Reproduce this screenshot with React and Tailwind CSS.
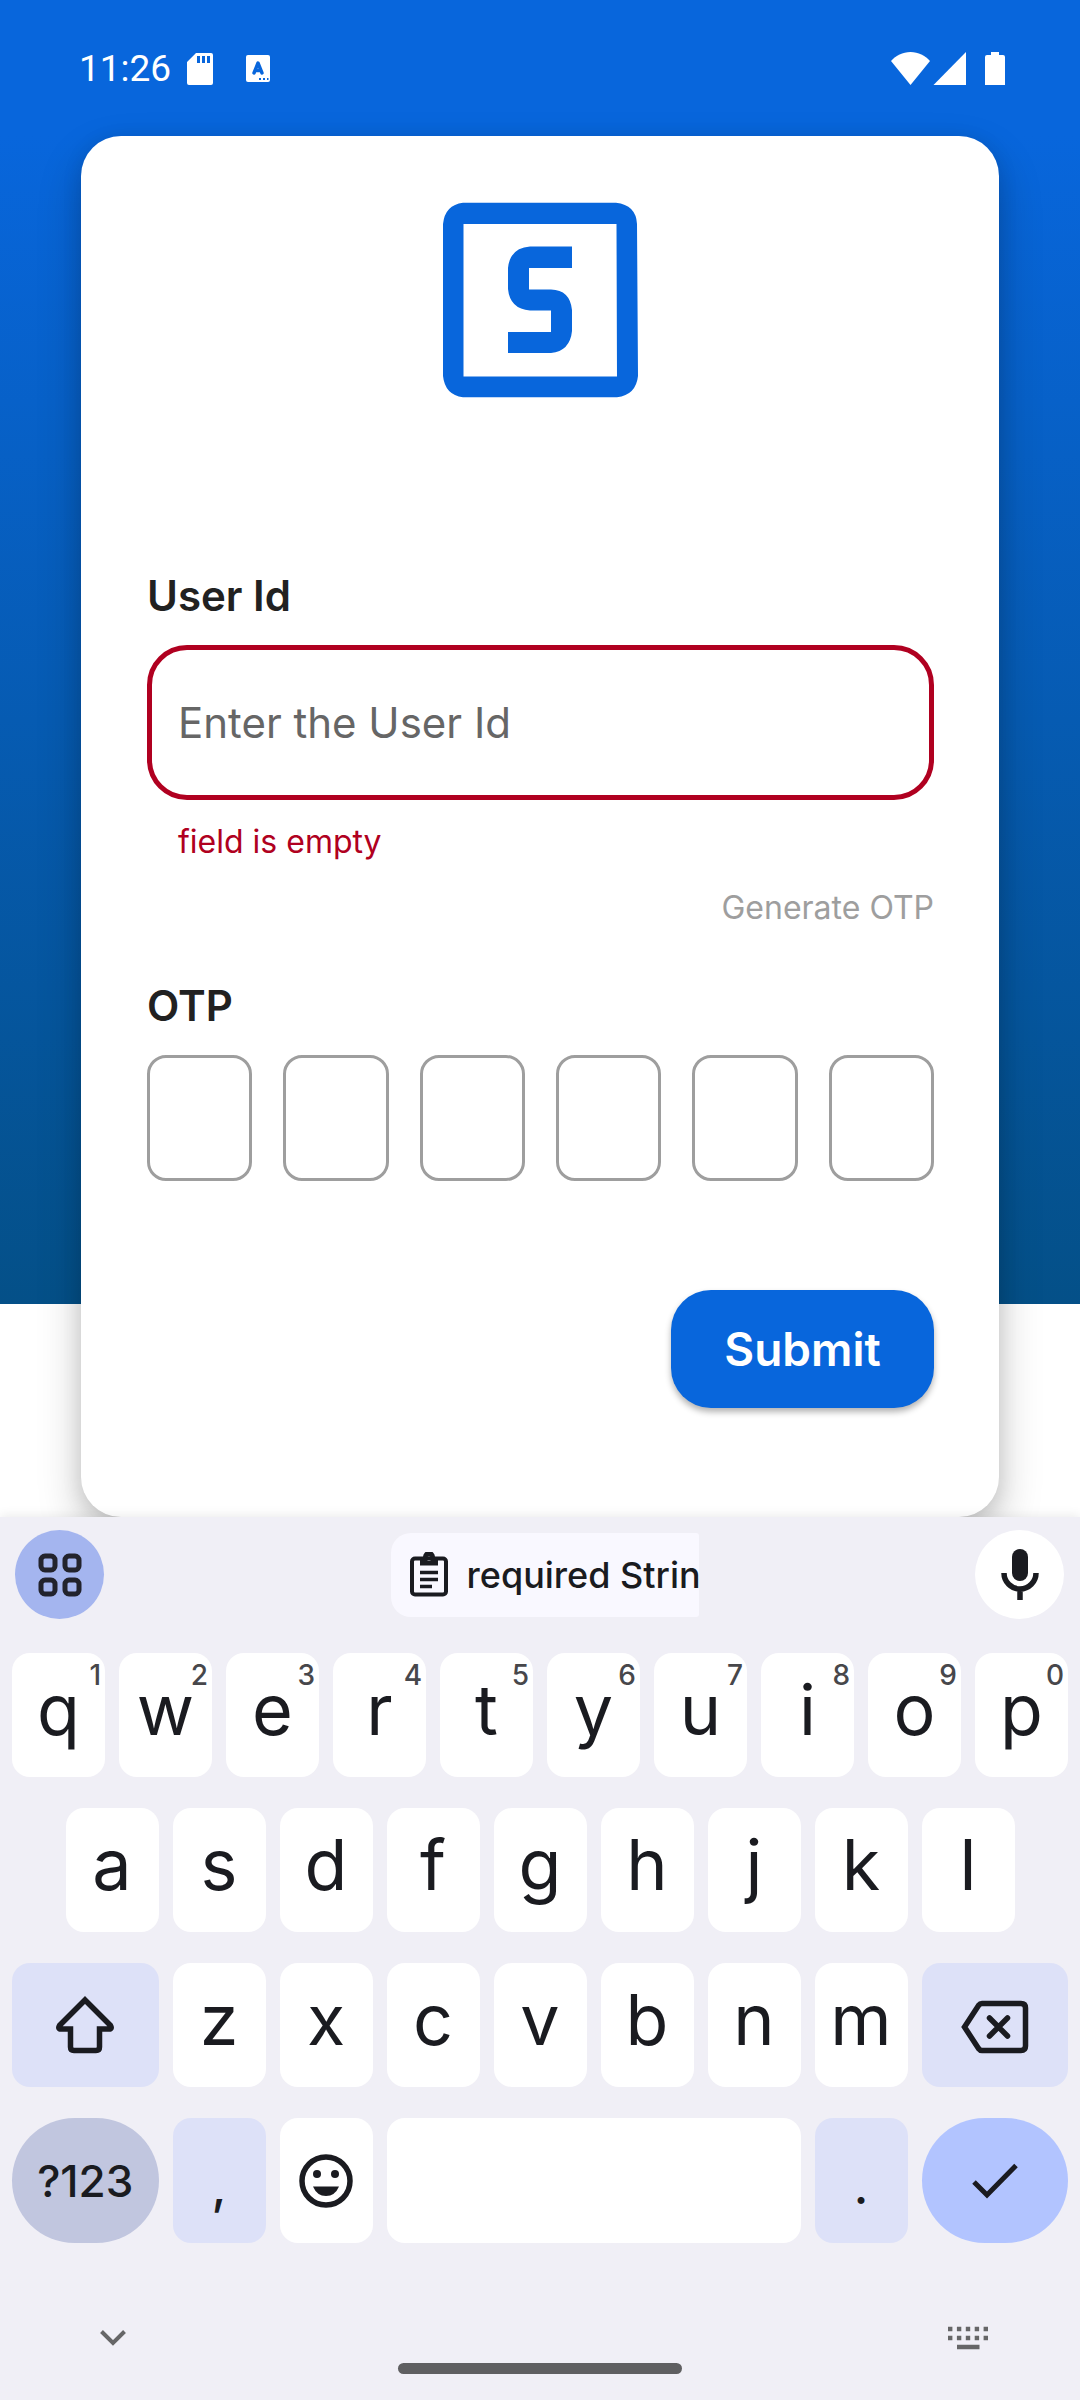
const INK = "#1a1b20";

function StatusBar() {
  return (
    <header className="flex h-[136px] items-center justify-between pt-[1px] pr-[75px] pl-[79px] font-[Roboto,sans-serif] text-white">
      <div className="flex items-center">
        <span className="text-[37px] leading-[44px]">11:26</span>
        <svg className="ml-[16px] h-8 w-[26px]" viewBox="0 0 26 32" aria-hidden="true">
          <path fill="#fff" fillRule="evenodd" d="M9 0h15a2 2 0 0 1 2 2v28a2 2 0 0 1-2 2H2a2 2 0 0 1-2-2V9zM10 3v7h3V3zM15 3v7h3V3zM20 3v7h3V3z" />
        </svg>
        <svg className="ml-[33px] h-[27px] w-6" viewBox="0 0 24 27" aria-hidden="true">
          <rect width="24" height="27" rx="2" fill="#fff" />
          <path d="M8 18 12 8l4 10M9.500 15.500h5" fill="none" stroke="#0866dc" strokeWidth="3.400" strokeLinecap="round" strokeLinejoin="round" />
          <path d="M13 24h2M17 24h2M21 24h1.500" stroke="#0866dc" strokeWidth="2" />
        </svg>
      </div>
      <svg className="h-[33px] w-[114px]" viewBox="0 0 114 33" fill="#fff" aria-hidden="true">
        <path d="M0 9C5 3.500 11.500 0 19.500 0S34 3.500 39 9L19.500 33z" />
        <path d="M75 0v33H42.500z" />
        <path d="M100 0h8v3h4q2 0 2 2v28H94V5q0-2 2-2h4z" />
      </svg>
    </header>
  );
}

function Logo() {
  return (
    <svg className="h-[196px] w-[196px]" viewBox="0 0 196 196" role="img" aria-label="Logo">
      <path
        fill="#0866dc"
        fillRule="evenodd"
        d="M20 .800H173Q193 3 194 22L195 174Q193 193 174 195.200H20Q2 193 0 174V22Q2 3 20 .800zM20.500 22V174.500H174L173.500 22z"
      />
      <path
        fill="#0866dc"
        d="M129 44.500H87Q67 46 65 66V87Q67 107 87 108.500H108V130H65V151H108Q127 149 129 129V108Q127 88 108 87.500H86V66H129z"
      />
    </svg>
  );
}

function LoginCard() {
  return (
    <form className="mx-[81px] flex flex-col rounded-[40px] bg-white pt-[66px] pr-[65px] pb-[109px] pl-[66px] shadow-[0_20px_44px_rgba(0,0,0,0.22),0_4px_20px_rgba(0,0,0,0.1)]">
      <div className="flex justify-center">
        <Logo />
      </div>
      <label htmlFor="user-id" className="mt-[174px] text-[42px] leading-[48px] font-semibold text-[#212121]">
        User Id
      </label>
      <input
        id="user-id"
        type="text"
        placeholder="Enter the User Id"
        aria-invalid="true"
        aria-describedby="user-id-error"
        className="mt-[25px] h-[155px] w-full rounded-[40px] border-[5px] border-[#b00020] bg-white px-[26px] text-[42px] text-[#212121] outline-none placeholder:text-[#666666]"
      />
      <p id="user-id-error" className="mt-[22px] pl-[31px] text-[32px] leading-[40px] text-[#b00020]">
        field is empty
      </p>
      <button type="button" className="mt-[26px] self-end text-[32px] leading-[40px] text-[#9e9e9e]">
        Generate OTP
      </button>
      <label htmlFor="otp-1" className="mt-[54px] text-[42px] leading-[48px] font-semibold text-[#212121]">
        OTP
      </label>
      <div className="mt-[25px] flex gap-[31px]">
        {[1, 2, 3, 4, 5, 6].map((n) => (
          <input
            key={n}
            id={`otp-${n}`}
            type="text"
            inputMode="numeric"
            maxLength={1}
            aria-label={`OTP digit ${n}`}
            className="h-[126px] w-0 min-w-0 flex-1 rounded-[19px] border-[3px] border-[#9e9e9e] bg-white text-center text-[42px] outline-none"
          />
        ))}
      </div>
      <button
        type="button"
        className="mt-[109px] h-[118px] w-[263px] self-end rounded-[40px] bg-[#0866dc] text-[46px] font-semibold text-white shadow-[0_4px_6px_rgba(0,0,0,0.3)]"
      >
        Submit
      </button>
    </form>
  );
}

function LetterKey({ letter, hint, className = "" }) {
  return (
    <button
      type="button"
      className={`relative col-span-2 mx-[7px] flex h-[124px] items-center justify-center rounded-[18px] bg-white pb-[10px] text-[70px] leading-[80px] ${className}`}
    >
      {letter}
      {hint && (
        <span className="absolute top-[6px] right-[4px] text-[28px] leading-[32px] font-medium text-[#47474b]">{hint}</span>
      )}
    </button>
  );
}

function SuggestionBar() {
  return (
    <div className="flex h-[89px] items-center justify-between pr-[16px] pl-[15px]">
      <button type="button" aria-label="Keyboard menu" className="flex h-[89px] w-[89px] items-center justify-center rounded-full bg-[#a4b5ef]">
        <svg className="h-[44px] w-[44px]" viewBox="0 0 44 44" fill="none" stroke="#22232d" strokeWidth="5" aria-hidden="true">
          <rect x="3" y="3" width="14" height="14" rx="4" />
          <rect x="27" y="3" width="14" height="14" rx="4" />
          <rect x="3" y="27" width="14" height="14" rx="4" />
          <rect x="27" y="27" width="14" height="14" rx="4" />
        </svg>
      </button>
      <button type="button" className="ml-[10px] flex h-[84px] w-[308px] items-center overflow-hidden rounded-l-[20px] rounded-r-[3px] bg-[#f9f8ff] pl-[19px]">
        <svg className="h-[45px] w-[38px] shrink-0" viewBox="0 0 38 45" aria-hidden="true">
          <rect x="2" y="6.500" width="34" height="36" rx="3" fill="none" stroke={INK} strokeWidth="4" />
          <path fill={INK} fillRule="evenodd" d="M10 5h3a6 6 0 0 1 12 0h3v8.500H10zM19 4.500a2.200 2.200 0 1 0 0 4.400 2.200 2.200 0 0 0 0-4.400z" />
          <path d="M10 20.500h18M10 27.500h18M10 34.500h12" stroke={INK} strokeWidth="3.500" />
        </svg>
        <span className="ml-[19px] text-[36px] leading-[44px] font-medium whitespace-nowrap">required Strin</span>
      </button>
      <button type="button" aria-label="Voice input" className="flex h-[89px] w-[89px] items-center justify-center rounded-full bg-white">
        <svg className="h-[52px] w-[38px]" viewBox="0 0 38 52" fill="none" stroke={INK} aria-hidden="true">
          <rect x="11" y="0" width="16" height="32" rx="8" fill={INK} stroke="none" />
          <path d="M3 24a16 16 0 0 0 32 0M19 40v11" strokeWidth="5.500" />
        </svg>
      </button>
    </div>
  );
}

function Keyboard() {
  return (
    <section aria-label="Keyboard" className="relative flex flex-1 flex-col bg-[#f0eff6] pt-[13px] text-[#1a1b20] shadow-[0_-2px_10px_rgba(0,0,0,0.08)]">
      <SuggestionBar />
      <div className="mt-[34px] grid grid-cols-20 gap-y-[31px] px-[5px]">
        {"qwertyuiop".split("").map((c, i) => (
          <LetterKey key={c} letter={c} hint={String((i + 1) % 10)} />
        ))}
        {"asdfghjkl".split("").map((c) => (
          <LetterKey key={c} letter={c} className={c === "a" ? "col-start-2" : ""} />
        ))}
        <button type="button" aria-label="Shift" className="col-span-3 col-start-1 mx-[7px] flex h-[124px] items-center justify-center rounded-[18px] bg-[#dde1f8]">
          <svg className="h-[58px] w-[60px]" viewBox="0 0 60 58" fill="none" stroke={INK} strokeWidth="5.500" aria-hidden="true">
            <path d="M30 4 55.500 29.500Q57.500 33 54 33H44.500V51Q44.500 54.500 41 54.500H19Q15.500 54.500 15.500 51V33H6Q2.500 33 4.500 29.500z" />
          </svg>
        </button>
        {"zxcvbnm".split("").map((c) => (
          <LetterKey key={c} letter={c} />
        ))}
        <button type="button" aria-label="Backspace" className="col-span-3 mx-[7px] flex h-[124px] items-center justify-center rounded-[18px] bg-[#dde1f8] pt-[4px]">
          <svg className="h-[54px] w-[68px]" viewBox="0 0 68 54" fill="none" stroke={INK} strokeWidth="5.500" aria-hidden="true">
            <path d="M21 3.500H60Q64.500 3.500 64.500 8V46Q64.500 50.500 60 50.500H21Q19 50.500 17.500 48.500L3.500 27 17.500 5.500Q19 3.500 21 3.500z" />
            <path d="m28.500 18 18 18M46.500 18l-18 18" strokeLinecap="round" />
          </svg>
        </button>
        <button type="button" className="col-span-3 mx-[7px] flex h-[125px] items-center justify-center rounded-full bg-[#c1c6df] text-[44px] leading-[50px] font-medium">
          ?123
        </button>
        <button type="button" className="col-span-2 mx-[7px] flex h-[125px] items-center justify-center rounded-[18px] bg-[#dde1f8] pt-[12px] text-[48px] leading-[60px] font-medium">
          ,
        </button>
        <button type="button" aria-label="Emoji" className="col-span-2 mx-[7px] flex h-[125px] items-center justify-center rounded-[18px] bg-white">
          <svg className="h-[54px] w-[54px]" viewBox="0 0 54 54" fill={INK} aria-hidden="true">
            <circle cx="27" cy="27" r="24" fill="none" stroke={INK} strokeWidth="5.500" />
            <circle cx="18" cy="20" r="4" />
            <circle cx="36" cy="20" r="4" />
            <path d="M14 32.500H40Q36 42 27 42T14 32.500z" />
          </svg>
        </button>
        <button type="button" aria-label="Space" className="col-span-8 mx-[7px] h-[125px] rounded-[18px] bg-white" />
        <button type="button" className="col-span-2 mx-[7px] flex h-[125px] items-center justify-center rounded-[18px] bg-[#dde1f8] pt-[12px] text-[48px] leading-[60px] font-medium">
          .
        </button>
        <button type="button" aria-label="Done" className="col-span-3 mx-[7px] flex h-[125px] items-center justify-center rounded-full bg-[#b2c4ff]">
          <svg className="h-[36px] w-[46px]" viewBox="0 0 46 36" fill="none" stroke={INK} strokeWidth="5" aria-hidden="true">
            <path d="m2 19 13 13L44 2.500" />
          </svg>
        </button>
      </div>
      <div className="mt-[83px] flex h-[24px] items-center justify-between pr-[92px] pl-[100px]">
        <button type="button" aria-label="Hide keyboard">
          <svg className="h-4 w-[26px]" viewBox="0 0 26 16" fill="none" stroke="#666667" strokeWidth="4" aria-hidden="true">
            <path d="m1.500 1.500 11.500 11.500L24.500 1.500" />
          </svg>
        </button>
        <button type="button" aria-label="Switch keyboard">
          <svg className="h-6 w-10" viewBox="0 0 40 24" fill="none" stroke="#666667" strokeWidth="4.500" aria-hidden="true">
            <path d="M0 3h40M0 12h40" strokeDasharray="4.400 4.500" />
            <path d="M9 21h22.500" />
          </svg>
        </button>
      </div>
      <div className="mx-auto mt-[13px] mb-[26px] h-[11px] w-[284px] rounded-full bg-[#5f5f61]" />
    </section>
  );
}

export default function App() {
  return (
    <div className="flex min-h-screen flex-col bg-white font-[Inter,sans-serif]">
      <main className="bg-[linear-gradient(to_bottom,#0866dc_136px,#045088_1304px,#ffffff_1304px)]">
        <StatusBar />
        <LoginCard />
      </main>
      <Keyboard />
    </div>
  );
}
